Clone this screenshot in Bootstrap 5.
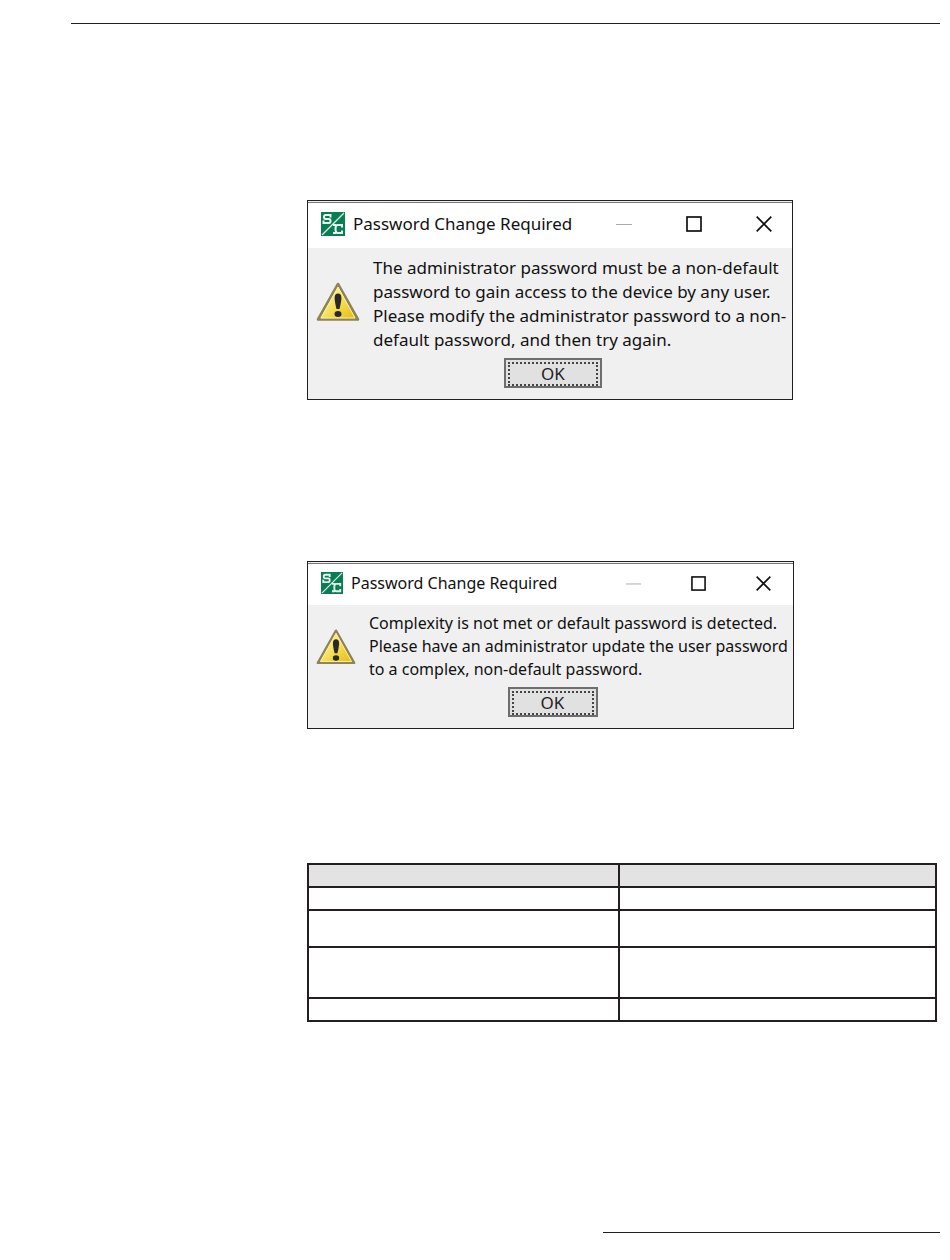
<!DOCTYPE html>
<html lang="en">
<head>
<meta charset="utf-8">
<meta name="viewport" content="width=device-width, initial-scale=1">
<title>Password Change Required</title>
<link href="https://cdn.jsdelivr.net/npm/bootstrap@5.3.0/dist/css/bootstrap.min.css" rel="stylesheet">
<style>
  body { font-family: "Noto Sans", "Open Sans", sans-serif; color: #111; background: #fff; }
  .sheet { padding: 23px 10px 27px 71px; }
  .rule { height: 1px; background: #231f20; }
  .rule-foot { width: 337px; }
  .sheet-main { padding: 176px 3px 0 236px; }
  .dialog-box { max-width: 486px; border: 1px solid #231f20; background: #f0f0f0; }
  .dialog-box + .dialog-box { margin-top: 161px; }
  .title-bar { height: 46px; margin-top: 1px; padding: 0 20px 3px 13px; background: #fff; border-top: 1px solid #777; font-size: 17px; line-height: 24px; }
  .title-bar h2 { font-size: inherit; line-height: inherit; font-weight: 400; white-space: nowrap; }
  .win-controls { gap: 54px; }
  .win-btn { border: 0; padding: 0; background: none; line-height: 0; }
  .message { gap: 13px; font-size: 17px; line-height: 24px; padding: 8px 0 0 8px; }
  .message p span { display: block; white-space: nowrap; }
  .actions { padding: 6px 0 11px 6px; }
  .ok-btn { width: 98px; height: 30px; padding: 2px; background: #e1e1e1; border: 2px solid #6e6e6e; font-size: 17px; line-height: 20px; color: #222; }
  .ok-btn span { display: block; border: 2px dotted #444; }
  .compact { max-width: 487px; }
  .compact .title-bar { height: 42px; padding-right: 22px; font-size: 16px; }
  .compact .win-controls { gap: 50px; }
  .compact .message { font-size: 16px; line-height: 23px; padding-top: 7px; }
  .compact .actions { padding-right: 2px; }
  .compact .ok-btn { width: 90px; }
  .spec-table { margin-top: 134px; table-layout: fixed; border-collapse: collapse; }
  .spec-table .first-col { width: 49.5%; }
  .spec-table th, .spec-table td { border: 2px solid #231f20; padding: 0; height: 23px; }
  .spec-table th { background: #e3e3e3; }
  .spec-table .two-line td { height: 37px; }
  .spec-table .three-line td { height: 51px; }
</style>
</head>
<body>
<svg class="position-absolute" width="0" height="0" aria-hidden="true" xmlns="http://www.w3.org/2000/svg">
  <defs>
    <linearGradient id="gold" x1="0" y1="0" x2="1" y2="1">
      <stop offset="0" stop-color="#fffbd0"/><stop offset=".5" stop-color="#f7e163"/><stop offset="1" stop-color="#e3b800"/>
    </linearGradient>
  </defs>
  <symbol id="logo" viewBox="0 0 24 24">
    <rect width="24" height="24" fill="#0b7d55"/>
    <path d="M1 23L23 1" stroke="#d8efe5" stroke-width="1.3"/>
    <path d="M9.500 5.500V3H4.500C2.500 3 2.500 7 4.500 7H8C10 7 10 11 8 11H2.500V8.500" fill="none" stroke="#e6f5ee" stroke-width="2"/>
    <path d="M21 15.500V13H16.500C14.800 13 14.500 14 14.500 17S14.800 21 16.500 21H21V18.500M12 13h3M12 21h3" fill="none" stroke="#e6f5ee" stroke-width="2"/>
  </symbol>
  <symbol id="warning" viewBox="0 0 44 40">
    <path d="M22 2L42 37.500H2Z" fill="url(#gold)" stroke="#8f8358" stroke-width="2.600" stroke-linejoin="round"/>
    <path d="M22 5L39 36H5Z" fill="none" stroke="#fff3a0" stroke-width="1" stroke-linejoin="round"/>
    <path d="M22 11.500C26.500 11.500 26 17 23.500 27H20.500C18 17 17.500 11.500 22 11.500Z" fill="#2a2a24"/>
    <ellipse cx="22" cy="32" rx="3.500" ry="3" fill="#2a2a24"/>
  </symbol>
  <symbol id="minimize" viewBox="0 0 16 16"><path d="M0 8.500H16" stroke="#aaa"/></symbol>
  <symbol id="maximize" viewBox="0 0 16 16"><rect x="1" y="1" width="14" height="14" fill="none" stroke="#111" stroke-width="1.700"/></symbol>
  <symbol id="close" viewBox="0 0 16 16"><path d="M.7.7L15.300 15.300M15.300.7L.7 15.300" stroke="#111" stroke-width="1.700"/></symbol>
</svg>
<div class="sheet min-vh-100 d-flex flex-column">
  <header class="rule"></header>
  <main class="sheet-main">
    <section class="dialog-box" aria-label="Administrator password notice">
      <div class="title-bar d-flex align-items-center gap-2">
        <svg width="24" height="24" aria-hidden="true"><use href="#logo"/></svg>
        <h2 class="m-0">Password Change Required</h2>
        <div class="win-controls d-flex ms-auto">
          <button class="win-btn" type="button" aria-label="Minimize"><svg width="16" height="16"><use href="#minimize"/></svg></button>
          <button class="win-btn" type="button" aria-label="Maximize"><svg width="16" height="16"><use href="#maximize"/></svg></button>
          <button class="win-btn" type="button" aria-label="Close"><svg width="16" height="16"><use href="#close"/></svg></button>
        </div>
      </div>
      <div class="message d-flex">
        <svg class="flex-shrink-0 mt-4" width="44" height="44" aria-hidden="true"><use href="#warning"/></svg>
        <p class="m-0"><span>The administrator password must be a non-default</span><span>password to gain access to the device by any user.</span><span>Please modify the administrator password to a non-</span><span>default password, and then try again.</span></p>
      </div>
      <div class="actions text-center"><button class="ok-btn" type="button"><span>OK</span></button></div>
    </section>
    <section class="dialog-box compact" aria-label="Password complexity notice">
      <div class="title-bar d-flex align-items-center gap-2">
        <svg width="22" height="22" aria-hidden="true"><use href="#logo"/></svg>
        <h2 class="m-0">Password Change Required</h2>
        <div class="win-controls d-flex ms-auto">
          <button class="win-btn" type="button" aria-label="Minimize"><svg width="15" height="15"><use href="#minimize"/></svg></button>
          <button class="win-btn" type="button" aria-label="Maximize"><svg width="15" height="15"><use href="#maximize"/></svg></button>
          <button class="win-btn" type="button" aria-label="Close"><svg width="15" height="15"><use href="#close"/></svg></button>
        </div>
      </div>
      <div class="message d-flex">
        <svg class="flex-shrink-0 mt-3" width="40" height="38" aria-hidden="true"><use href="#warning"/></svg>
        <p class="m-0"><span>Complexity is not met or default password is detected.</span><span>Please have an administrator update the user password</span><span>to a complex, non-default password.</span></p>
      </div>
      <div class="actions text-center"><button class="ok-btn" type="button"><span>OK</span></button></div>
    </section>
    <table class="spec-table w-100">
      <colgroup><col class="first-col"><col></colgroup>
      <thead><tr><th scope="col"></th><th scope="col"></th></tr></thead>
      <tbody>
        <tr><td></td><td></td></tr>
        <tr class="two-line"><td></td><td></td></tr>
        <tr class="three-line"><td></td><td></td></tr>
        <tr><td></td><td></td></tr>
      </tbody>
    </table>
  </main>
  <footer class="rule rule-foot mt-auto ms-auto"></footer>
</div>
<script src="https://cdn.jsdelivr.net/npm/bootstrap@5.3.0/dist/js/bootstrap.bundle.min.js"></script>
</body>
</html>
